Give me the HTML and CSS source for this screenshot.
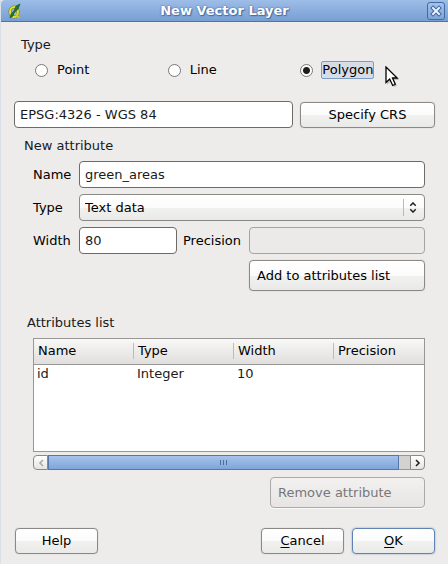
FILE: index.html
```html
<!DOCTYPE html>
<html lang="en">
<head>
<meta charset="utf-8">
<meta name="viewport" content="width=device-width, initial-scale=1">
<title>New Vector Layer</title>
<link rel="stylesheet" href="styles.css">
</head>
<body>
<main class="dialog">
  <header class="titlebar">
    <svg class="app-icon" viewBox="0 0 14 18" aria-hidden="true">
      <ellipse cx="6" cy="10" rx="4" ry="5" fill="none" stroke="#7d7a20" stroke-width="3"/>
      <ellipse cx="6" cy="10" rx="4" ry="5" fill="none" stroke="#dde02c" stroke-width="2"/>
      <path d="M7 11l4 5" stroke="#c9cc25" stroke-width="2"/>
      <path d="M12 2L8 4L6 9L3 12L2 16L5 14L6 11L8 9L10 7Z" fill="#1f7a2c" stroke="#12501b" stroke-width=".6"/>
    </svg>
    <h1 class="title">New Vector Layer</h1>
    <button class="close" type="button" aria-label="Close">
      <svg viewBox="0 0 16 16" aria-hidden="true">
        <path d="M5 5l6 6M11 5l-6 6" stroke="#3e659c" stroke-width="4" stroke-linecap="square"/>
        <path d="M5 5l6 6M11 5l-6 6" stroke="#e9f2ff" stroke-width="2" stroke-linecap="square"/>
      </svg>
    </button>
  </header>

  <form class="content">
    <fieldset class="group types">
      <legend>Type</legend>
      <div class="radios">
        <label><input type="radio" name="geometry"><span>Point</span></label>
        <label><input type="radio" name="geometry"><span>Line</span></label>
        <label class="current"><input type="radio" name="geometry" checked><span>Polygon</span>
          <svg class="pointer" viewBox="0 0 14 22" aria-hidden="true">
            <path d="M2 2v17l4-4 3 6 3-1-3-6h5Z" fill="#00000033"/>
            <path d="M1 1v15.500l3.700-3.500 3 6.500 2.600-1.200-2.800-6.300h4.700Z" fill="#fff" stroke="#000" stroke-width="1.300"/>
          </svg>
        </label>
      </div>
    </fieldset>

    <div class="crs">
      <input class="field" type="text" value="EPSG:4326 - WGS 84" aria-label="Coordinate reference system">
      <button class="button" type="button">Specify CRS</button>
    </div>

    <fieldset class="group attribute">
      <legend>New attribute</legend>
      <div class="form-grid">
        <label for="name">Name</label>
        <input class="field wide" id="name" type="text" value="green_areas">
        <label for="type">Type</label>
        <div class="combo wide">
          <select id="type"><option>Text data</option></select>
          <svg viewBox="0 0 8 12" aria-hidden="true"><path d="M1 4l3-3 3 3M1 8l3 3 3-3" fill="none" stroke="#222" stroke-width="1.600"/></svg>
        </div>
        <label for="width">Width</label>
        <input class="field" id="width" type="text" value="80">
        <label for="precision">Precision</label>
        <input class="field" id="precision" type="text" disabled>
        <button class="button tall add" type="button">Add to attributes list</button>
      </div>
    </fieldset>

    <fieldset class="group attributes">
      <legend>Attributes list</legend>
      <div class="list">
        <table>
          <thead><tr><th><span>Name</span></th><th><span>Type</span></th><th><span>Width</span></th><th><span>Precision</span></th></tr></thead>
          <tbody><tr><td>id</td><td>Integer</td><td>10</td><td></td></tr></tbody>
        </table>
      </div>
      <div class="scrollbar">
        <button type="button" disabled aria-label="Scroll left"><svg viewBox="0 0 6 8" aria-hidden="true"><path d="M5 1L2 4l3 3" fill="none" stroke="#aaa" stroke-width="1.600"/></svg></button>
        <div class="track"><div class="thumb"><i></i><i></i><i></i></div></div>
        <button type="button" aria-label="Scroll right"><svg viewBox="0 0 6 8" aria-hidden="true"><path d="M1 1l3 3-3 3" fill="none" stroke="#222" stroke-width="1.600"/></svg></button>
      </div>
      <button class="button tall remove" type="button" disabled>Remove attribute</button>
    </fieldset>

    <footer class="actions">
      <button class="button help" type="button">Help</button>
      <button class="button" type="button"><u>C</u>ancel</button>
      <button class="button default" type="submit"><u>O</u>K</button>
    </footer>
  </form>
</main>
</body>
</html>
```
FILE: styles.css
```css
* {
  box-sizing: border-box;
}

body {
  margin: 0;
  background: #edeceb;
  color: #1a1a1a;
  font: 13px/16px "DejaVu Sans", sans-serif;
}

input,
button,
select {
  margin: 0;
  color: inherit;
  font: inherit;
}

.dialog {
  min-height: 100vh;
  border-left: 1px solid #d9e0e8;
}

.titlebar {
  display: flex;
  align-items: center;
  height: 22px;
  padding: 0 3px 0 7px;
  border-bottom: 1px solid #4b74ab;
  border-top-left-radius: 4px;
  background: linear-gradient(#9ebde8, #779fd3);
}

.app-icon {
  width: 14px;
  height: 18px;
}

.title {
  flex: 1;
  margin: 0;
  color: #fff;
  font-size: 13px;
  font-weight: bold;
  line-height: 20px;
  text-align: center;
  text-shadow: 0 0 2px #34598e, 1px 1px 1px #4a70a6;
}

.close {
  width: 18px;
  height: 18px;
  padding: 0;
  border: 1px solid #416a9f;
  border-radius: 3px;
  background: linear-gradient(#a3c1ea, #7ea5d8);
}

.close svg {
  display: block;
  width: 16px;
  height: 16px;
}

.content {
  padding: 15px 13px 11px;
}

.group {
  min-width: 0;
  margin: 0;
  padding: 0;
  border: 0;
}

.group legend {
  padding: 0;
}

.types {
  padding-left: 7px;
}

.radios {
  display: grid;
  grid-template-columns: 1fr 1fr 1fr;
  margin-top: 8px;
  padding-right: 2px;
  padding-left: 14px;
}

.radios label {
  display: flex;
  align-items: center;
  gap: 8px;
  position: relative;
  color: #000;
}

.radios span {
  border: 1px solid transparent;
}

.radios .current span {
  border-color: #7d9cc4;
  border-radius: 2px;
  background: #d6dde6;
}

input[type="radio"] {
  width: 13px;
  height: 13px;
  appearance: none;
  border: 1px solid #777;
  border-radius: 50%;
  background: #fff;
}

input[type="radio"]:checked {
  background: radial-gradient(circle, #1c1c1c 0 3px, #fff 4px);
}

.pointer {
  position: absolute;
  top: 5px;
  left: 85px;
  width: 14px;
  height: 22px;
}

.crs {
  display: grid;
  grid-template-columns: 279fr 135fr;
  align-items: center;
  gap: 7px;
  margin-top: 22px;
}

.field {
  width: 100%;
  height: 27px;
  padding: 0 5px;
  border: 1px solid #6d6b68;
  border-radius: 4px;
  background: #fff;
}

.field:disabled {
  border-color: #a6a4a2;
  background: #ebeae9;
}

.button {
  height: 26px;
  padding: 0 7px;
  border: 1px solid #8b8986;
  border-radius: 4px;
  background: linear-gradient(#fff, #fbfbfb 50%, #f1f1f0 51%, #e9e9e8);
  box-shadow: 0 0 1px #aaa;
  color: #000;
}

.button:disabled {
  border-color: #acaaa8;
  background: linear-gradient(#f2f1f0, #e6e5e4);
  box-shadow: 0 1px #fafafa;
  color: #777;
}

.tall {
  height: 31px;
  text-align: left;
}

.attribute {
  margin-top: 10px;
  padding: 0 10px;
}

.form-grid {
  display: grid;
  grid-template-columns: 40px 98fr 60px 176fr;
  align-items: center;
  gap: 6px;
  margin-top: 7px;
  padding-left: 9px;
  color: #000;
}

.form-grid .field {
  color: #1a1a1a;
}

.wide {
  grid-column: 2 / -1;
}

.add {
  grid-column: 4;
}

.combo {
  display: grid;
  align-items: center;
}

.combo select {
  grid-area: 1 / 1;
  width: 100%;
  height: 27px;
  padding: 0 5px;
  appearance: none;
  border: 1px solid #8b8986;
  border-radius: 4px;
  background: linear-gradient(#fff, #fbfbfb 50%, #f1f1f0 51%, #e9e9e8);
}

.combo svg {
  grid-area: 1 / 1;
  justify-self: end;
  width: 22px;
  height: 17px;
  padding: 3px 8px 3px 5px;
  border-left: 1px solid #bbb;
  pointer-events: none;
}

.attributes {
  margin-top: 24px;
  padding: 0 10px 0 13px;
}

.list {
  height: 114px;
  margin-top: 7px;
  margin-left: 6px;
  border: 1px solid #999795;
  background: #fff;
}

.list table {
  width: 100%;
  border-collapse: collapse;
  table-layout: fixed;
}

.list th {
  height: 25px;
  padding: 0;
  border-bottom: 1px solid #999795;
  background: linear-gradient(#f8f8f7, #e0dfde);
  color: #000;
  font-weight: normal;
  text-align: left;
}

.list th:not(:last-child) {
  width: 100px;
}

.list th:first-child {
  width: 99px;
}

.list th span {
  display: block;
  padding-left: 4px;
}

.list th + th span {
  border-left: 1px solid #bbb;
}

.list td {
  height: 20px;
  padding: 0 3px;
}

.list td + td {
  padding-left: 4px;
}

.scrollbar {
  display: flex;
  height: 15px;
  margin-top: 3px;
  margin-left: 6px;
}

.scrollbar button {
  display: flex;
  align-items: center;
  justify-content: center;
  width: 15px;
  padding: 0;
  border: 1px solid #8b8986;
  border-radius: 4px 0 0 4px;
  background: linear-gradient(#fff, #e5e4e3);
}

.scrollbar button:last-child {
  border-radius: 0 4px 4px 0;
}

.scrollbar svg {
  width: 6px;
  height: 8px;
}

.track {
  flex: 1;
  border: 1px solid #999795;
  border-width: 1px 0;
  background: #d3d2d0;
}

.thumb {
  display: flex;
  align-items: center;
  justify-content: center;
  gap: 2px;
  width: 97%;
  height: 15px;
  margin-top: -1px;
  border: 1px solid #5278ac;
  background: linear-gradient(#a6c3ea, #7ea5d8);
}

.thumb i {
  width: 1px;
  height: 5px;
  background: #4b6f9f;
}

.remove {
  display: block;
  width: 155px;
  margin: 7px 0 0 auto;
}

.actions {
  display: flex;
  gap: 8px;
  margin-top: 20px;
  padding-left: 1px;
}

.actions .button {
  width: 83px;
}

.help {
  margin-right: auto;
}

.default {
  border-color: #5f83b5;
  box-shadow: 0 0 2px #7f9fca;
}

u {
  text-underline-offset: 2px;
}
```
